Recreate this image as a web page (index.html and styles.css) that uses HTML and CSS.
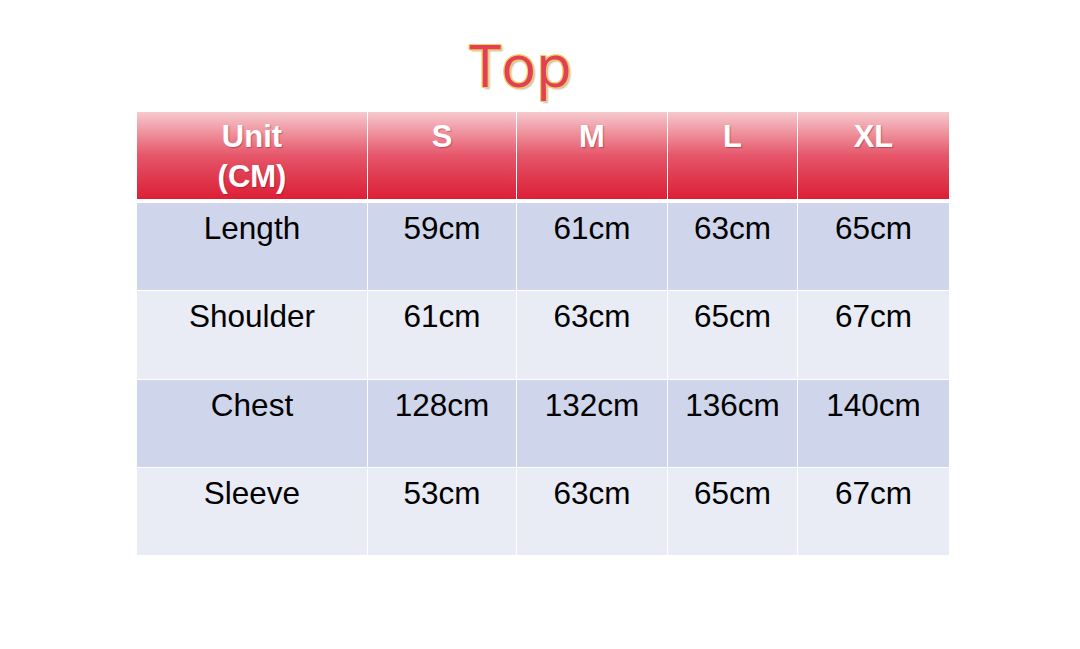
FILE: index.html
```html
<!DOCTYPE html>
<html>
<head>
<meta charset="utf-8">
<link rel="stylesheet" href="styles.css">
</head>
<body>
<div class="page">
  <h1 class="title">Top</h1>
  <div class="chart">
    <div class="head">Unit<br>(CM)</div>
    <div class="head">S</div>
    <div class="head">M</div>
    <div class="head">L</div>
    <div class="head">XL</div>

    <div class="cell odd">Length</div>
    <div class="cell odd">59cm</div>
    <div class="cell odd">61cm</div>
    <div class="cell odd">63cm</div>
    <div class="cell odd">65cm</div>

    <div class="cell even">Shoulder</div>
    <div class="cell even">61cm</div>
    <div class="cell even">63cm</div>
    <div class="cell even">65cm</div>
    <div class="cell even">67cm</div>

    <div class="cell odd">Chest</div>
    <div class="cell odd">128cm</div>
    <div class="cell odd">132cm</div>
    <div class="cell odd">136cm</div>
    <div class="cell odd">140cm</div>

    <div class="cell even">Sleeve</div>
    <div class="cell even">53cm</div>
    <div class="cell even">63cm</div>
    <div class="cell even">65cm</div>
    <div class="cell even">67cm</div>
  </div>
</div>
</body>
</html>
```
FILE: styles.css
```css
html, body {
  margin: 0;
  padding: 0;
  background: #ffffff;
}
.page {
  width: 812px;
  margin-left: 137px;
  padding-top: 30px;
}
.title {
  margin: 0 0 12px 0;
  padding-right: 45px;
  text-align: center;
  font-family: "Open Sans", sans-serif;
  font-weight: 400;
  font-size: 58px;
  line-height: 70px;
  color: #e23f5b;
  text-shadow:
    1px 0 0 #f4cf58, -1px 0 0 #f4cf58, 0 1px 0 #f4cf58, 0 -1px 0 #f4cf58,
    1px 1px 0 #f4cf58, -1px -1px 0 #f4cf58, 1px -1px 0 #f4cf58, -1px 1px 0 #f4cf58,
    2px 2px 2px rgba(0, 0, 0, 0.28);
}
.chart {
  display: grid;
  grid-template-columns: 230px 148px 150px 129px 151px;
  grid-template-rows: 90px repeat(4, 87.3px);
  column-gap: 1px;
  row-gap: 1px;
  background: #ffffff;
  font-family: "Liberation Sans", Arial, sans-serif;
}
.head {
  box-sizing: border-box;
  border-bottom: 3px solid #ffffff;
  padding-top: 5px;
  text-align: center;
  color: #ffffff;
  font-weight: 700;
  font-size: 31px;
  line-height: 40px;
  text-shadow: 1px 1px 1px rgba(120, 0, 20, 0.35);
  background: linear-gradient(to bottom, #f6c9ce 0%, #ee909b 25%, #e5566a 50%, #e03a4f 75%, #dc1f36 100%);
  background-clip: padding-box;
}
.cell {
  box-sizing: border-box;
  padding-top: 7px;
  text-align: center;
  color: #000000;
  font-size: 31.5px;
  line-height: 36px;
}
.odd {
  background: #cfd5ea;
}
.even {
  background: #e9ebf5;
}
```
